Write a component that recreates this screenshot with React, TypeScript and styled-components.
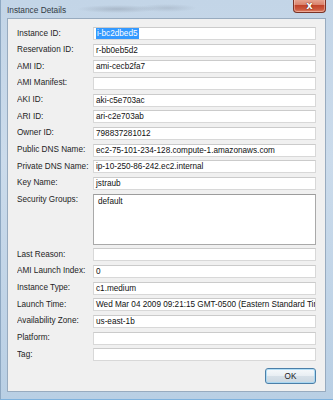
import React from "react";
import styled, { createGlobalStyle } from "styled-components";

const GlobalStyle = createGlobalStyle`
  html, body {
    margin: 0;
    padding: 0;
    background: #c4d6e8;
  }
  * {
    box-sizing: border-box;
  }
`;

const fields: { label: string; value: string; selected?: boolean }[] = [
  { label: "Instance ID:", value: "i-bc2dbed5", selected: true },
  { label: "Reservation ID:", value: "r-bb0eb5d2" },
  { label: "AMI ID:", value: "ami-cecb2fa7" },
  { label: "AMI Manifest:", value: "" },
  { label: "AKI ID:", value: "aki-c5e703ac" },
  { label: "ARI ID:", value: "ari-c2e703ab" },
  { label: "Owner ID:", value: "798837281012" },
  { label: "Public DNS Name:", value: "ec2-75-101-234-128.compute-1.amazonaws.com" },
  { label: "Private DNS Name:", value: "ip-10-250-86-242.ec2.internal" },
  { label: "Key Name:", value: "jstraub" },
];

const lowerFields: { label: string; value: string }[] = [
  { label: "Last Reason:", value: "" },
  { label: "AMI Launch Index:", value: "0" },
  { label: "Instance Type:", value: "c1.medium" },
  { label: "Launch Time:", value: "Wed Mar 04 2009 09:21:15 GMT-0500 (Eastern Standard Time)" },
  { label: "Availability Zone:", value: "us-east-1b" },
  { label: "Platform:", value: "" },
  { label: "Tag:", value: "" },
];

const App = () => {
  return (
    <>
      <GlobalStyle />
      <Window>
        <TitleBar>
          <Title>Instance Details</Title>
          <CloseButton>
            <CloseGlyph>x</CloseGlyph>
          </CloseButton>
        </TitleBar>
        <Client>
          <Form>
            {fields.map((f) => (
              <React.Fragment key={f.label}>
                <Label>{f.label}</Label>
                <Field>
                  {f.selected ? <Selection>{f.value}</Selection> : f.value}
                </Field>
              </React.Fragment>
            ))}
            <Label $top>Security Groups:</Label>
            <TextArea>default</TextArea>
            {lowerFields.map((f) => (
              <React.Fragment key={f.label}>
                <Label>{f.label}</Label>
                <Field>{f.value}</Field>
              </React.Fragment>
            ))}
          </Form>
          <Footer>
            <OkButton>OK</OkButton>
          </Footer>
        </Client>
      </Window>
    </>
  );
};
export default App;

const Window = styled.div`
  width: 333px;
  height: 400px;
  display: flex;
  flex-direction: column;
  padding: 0 7px 7px 6px;
  background: linear-gradient(
    to bottom,
    #c3d5e7 0%,
    #cbdbeb 40%,
    #b9cfe4 100%
  );
  border-left: 1px solid #8ea8c2;
  border-bottom: 1px solid #7fb2dd;
  font-family: "Liberation Sans", Arial, sans-serif;
  font-size: 8.2px;
  color: #1b1b1b;
  overflow: hidden;
`;

const TitleBar = styled.div`
  height: 18px;
  display: flex;
  align-items: flex-start;
  justify-content: space-between;
  background: radial-gradient(
      ellipse 40px 4px at 110px 9px,
      rgba(120, 130, 145, 0.35),
      transparent
    ),
    radial-gradient(ellipse 30px 4px at 160px 8px, rgba(120, 130, 145, 0.25), transparent);
`;

const Title = styled.span`
  padding-top: 5px;
  font-size: 8.3px;
  color: #333b44;
`;

const CloseButton = styled.div`
  width: 33px;
  height: 14px;
  margin-top: -1px;
  display: flex;
  align-items: center;
  justify-content: center;
  border: 1px solid #7a3326;
  border-top: none;
  border-radius: 0 0 4px 4px;
  background: linear-gradient(
    to bottom,
    #e9a996 0%,
    #d9826c 45%,
    #c1432a 50%,
    #cc5a40 80%,
    #e0876c 100%
  );
  box-shadow: inset 0 0 0 1px rgba(255, 220, 210, 0.45);
`;

const CloseGlyph = styled.span`
  font-family: "DejaVu Sans", sans-serif;
  font-weight: bold;
  font-size: 10px;
  line-height: 10px;
  color: #fff;
  text-shadow: 0 0 1px #5a1a10, 0 0 1px #5a1a10;
`;

const Client = styled.div`
  flex: 1;
  display: flex;
  flex-direction: column;
  background: #f0f0f0;
  border: 1px solid #98abbf;
  padding: 8px 9px 0 9px;
`;

const Form = styled.div`
  display: grid;
  grid-template-columns: 76px 1fr;
  row-gap: 3.67px;
`;

const Label = styled.div<{ $top?: boolean }>`
  display: flex;
  align-items: ${(p) => (p.$top ? "flex-start" : "center")};
  padding-top: ${(p) => (p.$top ? "1px" : "0")};
  padding-bottom: ${(p) => (p.$top ? "0" : "1px")};
  white-space: nowrap;
  overflow: hidden;
  color: #1e1e1e;
`;

const Field = styled.div`
  height: 13px;
  display: flex;
  align-items: center;
  padding-left: 2px;
  background: #fff;
  border: 1px solid #d8d8d8;
  border-top-color: #cbcbcb;
  white-space: nowrap;
  overflow: hidden;
  color: #111;
`;

const Selection = styled.span`
  background: #3399ff;
  color: #fff;
  padding: 0 1px;
  line-height: 11px;
`;

const TextArea = styled.div`
  height: 51px;
  padding: 2px 4px;
  background: #fff;
  border: 1px solid #a9a9a9;
  border-top-color: #9c9c9c;
  color: #111;
`;

const Footer = styled.div`
  display: flex;
  justify-content: flex-end;
  margin-top: 7px;
`;

const OkButton = styled.div`
  width: 51px;
  height: 16px;
  display: flex;
  align-items: center;
  justify-content: center;
  border: 1px solid #4b7fa8;
  border-radius: 3px;
  background: linear-gradient(
    to bottom,
    #f6f9fb 0%,
    #e8eef3 48%,
    #d6e0e8 52%,
    #cbd7e1 100%
  );
  box-shadow: inset 0 0 0 1px rgba(160, 215, 245, 0.8);
  color: #1a1a1a;
`;
